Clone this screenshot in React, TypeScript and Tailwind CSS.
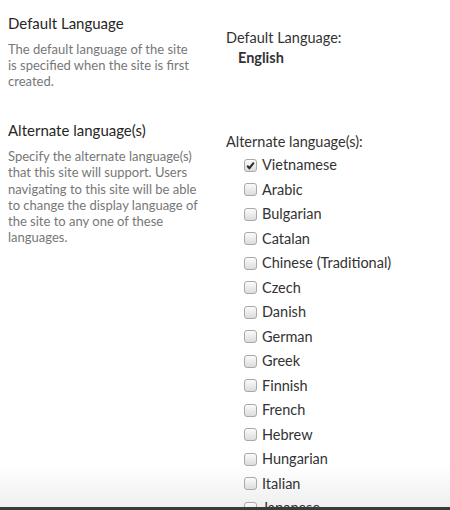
import React from 'react';

// SharePoint-style language settings section

const languages = [
  'Vietnamese',
  'Arabic',
  'Bulgarian',
  'Catalan',
  'Chinese (Traditional)',
  'Czech',
  'Danish',
  'German',
  'Greek',
  'Finnish',
  'French',
  'Hebrew',
  'Hungarian',
  'Italian',
  'Japanese',
];

const Box: React.FC<{ checked?: boolean }> = ({ checked = false }) => (
  <span className="w-[13px] h-[13px] rounded-[3px] border border-[#a9a9a9] bg-gradient-to-b from-[#fbfbfb] to-[#dcdcdc] flex items-center justify-center shrink-0">
    {checked && (
      <svg width="9" height="9" viewBox="0 0 9 9">
        <path d="M1.2 4.8 L3.4 7.2 L7.8 1.6" stroke="#2a2a2a" strokeWidth="2" fill="none" />
      </svg>
    )}
  </span>
);

export default function App() {
  return (
    <div className="relative w-[450px] h-[510px] overflow-hidden bg-white font-['Lato',sans-serif]">
      {/* page background fade */}
      <div className="absolute left-0 right-0 bottom-[3px] h-[42px] bg-gradient-to-b from-white to-[#efefef]"></div>

      <div className="relative flex pl-2">
        {/* Left column */}
        <div className="w-[190px] flex flex-col pt-[13px]">
          <h2 className="text-[15px] leading-5 text-[#262626]">Default Language</h2>
          <p className="mt-[8px] text-[13px] leading-4 text-[#777]">
            The default language of the site is specified when the site is first created.
          </p>
          <h2 className="mt-[31px] text-[15px] leading-5 text-[#262626]">Alternate language(s)</h2>
          <p className="mt-[8px] text-[13px] leading-[16.3px] text-[#777]">
            Specify the alternate language(s) that this site will support. Users navigating to this site will be able to change the display language of the site to any one of these languages.
          </p>
        </div>

        {/* Right column */}
        <div className="ml-[28px] flex flex-col pt-[28px] text-[#333]">
          <div className="text-[14.5px] leading-5">Default Language:</div>
          <div className="pl-3 text-[14.5px] leading-5 font-bold text-[#333]">English</div>
          <div className="mt-[64px] text-[14.5px] leading-5">Alternate language(s):</div>
          <div className="mt-[1px] flex flex-col pl-[18px]">
            {languages.map((l, i) => (
              <label key={l} className="h-[24.5px] flex items-center gap-[5px] text-[14.5px]">
                <Box checked={i === 0} />
                <span>{l}</span>
              </label>
            ))}
          </div>
        </div>
      </div>

      <div className="absolute left-0 right-0 bottom-0 h-[3px] bg-[#3a3a3a]"></div>
    </div>
  );
}
